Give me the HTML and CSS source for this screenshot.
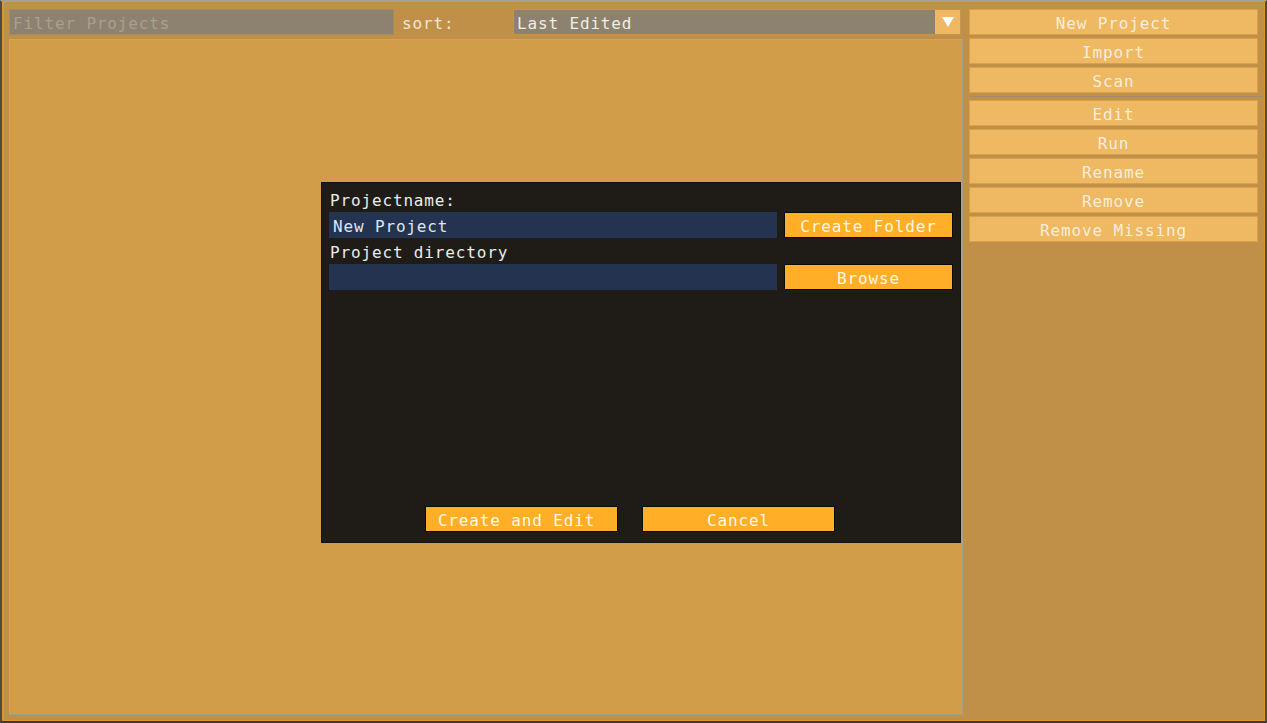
FILE: index.html
```html
<!DOCTYPE html>
<html>
<head>
<meta charset="utf-8">
<link rel="stylesheet" href="styles.css">
</head>
<body>
<div class="window">
  <div class="frame">
    <div class="left">
      <div class="toolbar">
        <div class="filter">Filter Projects</div>
        <span class="sort-label">sort:</span>
        <div class="combo">
          <span class="combo-value">Last Edited</span>
          <div class="combo-arrow">
            <svg width="14" height="12" viewBox="0 0 14 12"><polygon points="1,1 13,1 7,11" fill="#ffffff"/></svg>
          </div>
        </div>
      </div>
      <div class="list">
        <div class="modal">
          <div class="label">Projectname:</div>
          <div class="row">
            <div class="input">New Project</div>
            <div class="btn-orange side">Create Folder</div>
          </div>
          <div class="label">Project directory</div>
          <div class="row">
            <div class="input"></div>
            <div class="btn-orange side">Browse</div>
          </div>
          <div class="footer">
            <div class="btn-orange wide create">Create and Edit</div>
            <div class="btn-orange wide">Cancel</div>
          </div>
        </div>
      </div>
    </div>
    <div class="right">
      <div class="btn">New Project</div>
      <div class="btn">Import</div>
      <div class="btn">Scan</div>
      <div class="separator"></div>
      <div class="btn">Edit</div>
      <div class="btn">Run</div>
      <div class="btn">Rename</div>
      <div class="btn">Remove</div>
      <div class="btn">Remove Missing</div>
    </div>
  </div>
</div>
</body>
</html>
```

FILE: styles.css
```css
* { box-sizing: border-box; }
html, body {
  margin: 0;
  padding: 0;
  width: 1267px;
  height: 723px;
  overflow: hidden;
  background: #3a3a3a;
}
body {
  font-family: "DejaVu Sans Mono", "Liberation Mono", monospace;
  font-size: 16px;
  letter-spacing: 0.85px;
}
.window {
  width: 1267px;
  height: 723px;
  border-top: 2px solid #a2a09c;
  border-left: 2px solid #4c4a48;
  border-right: 2px solid #55493a;
  border-bottom: 2px solid #3a3a3a;
  background: #c09049;
}
.frame {
  height: 100%;
  border-left: 2px solid #d99a22;
  border-right: 1px solid #d99a22;
  border-bottom: 1px solid #d99a22;
  padding: 7px 6px 5px 5px;
  display: flex;
  gap: 6px;
}
.left {
  width: 954px;
  display: flex;
  flex-direction: column;
  gap: 4px;
}
.toolbar {
  height: 26px;
  display: flex;
  align-items: stretch;
}
.filter {
  width: 385px;
  background: #8c826f;
  border: 1px solid #a48c5e;
  color: #a9a08e;
  padding: 3px 0 0 3px;
  line-height: 21px;
}
.sort-label {
  color: #f3e6d0;
  line-height: 22px;
  padding: 4px 0 0 8px;
  width: 119px;
}
.combo {
  width: 448px;
  display: flex;
  background: #8c826f;
  border: 1px solid #c2964e;
}
.combo-value {
  flex: 1;
  color: #f2ede4;
  padding: 3px 0 0 3px;
  line-height: 21px;
}
.combo-arrow {
  width: 25px;
  background: #f0b862;
  display: flex;
  align-items: center;
  justify-content: center;
}
.list {
  flex: 1;
  position: relative;
  background: #d29d48;
  border-top: 1px solid #e3a42a;
  border-left: 1px solid #e3a42a;
  border-right: 1px solid #ab9c86;
  border-bottom: 1px solid #a89a88;
}
.modal {
  position: absolute;
  left: 311px;
  top: 142px;
  width: 640px;
  height: 361px;
  background: #1f1c18;
  border: 1px solid #14120f;
  padding: 7px 7px 10px 7px;
  display: flex;
  flex-direction: column;
  gap: 4px;
}
.label {
  height: 18px;
  line-height: 18px;
  padding: 2px 0 0 1px;
  color: #ececec;
  overflow: visible;
  white-space: nowrap;
}
.row {
  display: flex;
  gap: 7px;
  height: 26px;
}
.input {
  width: 448px;
  background: #243450;
  color: #dfe6f5;
  line-height: 23px;
  padding: 3px 0 0 4px;
}
.btn-orange {
  background: #ffae27;
  border: 1px solid #0c0a06;
  color: #fff7e2;
  text-align: center;
  line-height: 21px;
  padding-top: 3px;
}
.side { width: 169px; }
.footer {
  margin-top: auto;
  display: flex;
  gap: 24px;
  height: 26px;
  padding-left: 96px;
}
.wide { width: 193px; }
.create { padding-right: 10px; }
.right {
  width: 289px;
  display: flex;
  flex-direction: column;
  gap: 3px;
}
.btn {
  height: 26px;
  background: #efb862;
  border: 1px solid #d9a04a;
  color: #f9eed9;
  text-align: center;
  line-height: 21px;
  padding-top: 3px;
}
.separator {
  height: 1px;
  background: #a08c6a;
  margin: 0 -5px 0 1px;
}
```
